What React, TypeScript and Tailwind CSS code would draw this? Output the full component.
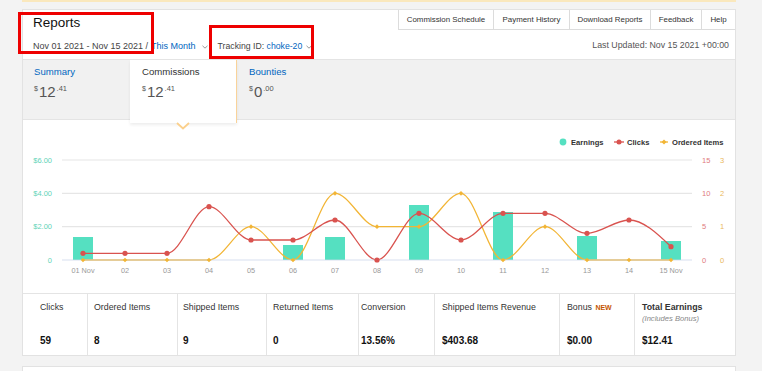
import React from "react";

const FONT = "Liberation Sans, Arial, sans-serif";
const xs = Array.from({ length: 15 }, (_, i) => 60 + 42 * i);
const clicks = [1, 1, 1, 8, 3, 3, 6, 0, 7, 3, 7, 7, 4, 6, 2];
const items = [0, 0, 0, 0, 1, 0, 2, 1, 1, 2, 0, 1, 0, 0, 0];
const bars: Record<number, number> = { 0: 117, 5: 125, 6: 117, 8: 85, 10: 92, 12: 116, 14: 121 };
const labels = ["01 Nov", "02", "03", "04", "05", "06", "07", "08", "09", "10", "11", "12", "13", "14", "15 Nov"];

const clickY = (v: number) => 140 - (v * 100) / 15;
const itemY = (v: number) => 140 - (v * 100) / 3;

function monotone(pts: [number, number][]) {
  const n = pts.length;
  const t: number[] = new Array(n).fill(0);
  const sign = (v: number) => (v < 0 ? -1 : 1);
  for (let i = 1; i < n - 1; i++) {
    const h0 = pts[i][0] - pts[i - 1][0];
    const h1 = pts[i + 1][0] - pts[i][0];
    const s0 = (pts[i][1] - pts[i - 1][1]) / h0;
    const s1 = (pts[i + 1][1] - pts[i][1]) / h1;
    const p = (s0 * h1 + s1 * h0) / (h0 + h1);
    t[i] = (sign(s0) + sign(s1)) * Math.min(Math.abs(s0), Math.abs(s1), 0.5 * Math.abs(p)) || 0;
  }
  const h0 = pts[1][0] - pts[0][0];
  t[0] = (3 * (pts[1][1] - pts[0][1]) / h0 - t[1]) / 2;
  const hl = pts[n - 1][0] - pts[n - 2][0];
  t[n - 1] = (3 * (pts[n - 1][1] - pts[n - 2][1]) / hl - t[n - 2]) / 2;
  let d = `M${pts[0][0]},${pts[0][1]}`;
  for (let i = 0; i < n - 1; i++) {
    const [x0, y0] = pts[i];
    const [x1, y1] = pts[i + 1];
    const dx = (x1 - x0) / 3;
    d += ` C${x0 + dx},${y0 + dx * t[i]} ${x1 - dx},${y1 - dx * t[i + 1]} ${x1},${y1}`;
  }
  return d;
}

function Chevron({ className = "" }: { className?: string }) {
  return (
    <svg width="6" height="4" viewBox="0 0 6 4" className={className}>
      <polyline points="0.5,0.8 3,3.2 5.5,0.8" fill="none" stroke="#8a8a8a" strokeWidth="0.9" />
    </svg>
  );
}

function Amount({ whole, cents }: { whole: string; cents: string }) {
  return (
    <div className="mt-[6px] flex items-start leading-none text-[#555]">
      <span className="text-[7px] mt-[1px]">$</span>
      <span className="text-[15px] ml-[1px]">{whole}</span>
      <span className="text-[7.5px] mt-[1px] ml-[1px]">{cents}</span>
    </div>
  );
}

function Chart() {
  const grid = [40, 73.33, 106.67];
  const clickPts = xs.map((x, i) => [x, clickY(clicks[i])] as [number, number]);
  const itemPts = xs.map((x, i) => [x, itemY(items[i])] as [number, number]);
  return (
    <svg width="712" height="173" viewBox="0 0 712 173" style={{ fontFamily: FONT }}>
      {/* legend */}
      <circle cx="540" cy="22" r="3.4" fill="#55e0c1" />
      <text x="548" y="24.8" fontSize="7.6" fontWeight="bold" fill="#333">Earnings</text>
      <line x1="591" y1="22" x2="601" y2="22" stroke="#d9534f" strokeWidth="1.3" />
      <circle cx="596" cy="22" r="2.5" fill="#d9534f" />
      <text x="604" y="24.8" fontSize="7.6" fontWeight="bold" fill="#333">Clicks</text>
      <line x1="637" y1="22" x2="645" y2="22" stroke="#f2b535" strokeWidth="1.3" />
      <polygon points="641,19.5 643.5,22 641,24.5 638.5,22" fill="#f2b535" />
      <text x="649" y="24.8" fontSize="7.6" fontWeight="bold" fill="#333">Ordered Items</text>

      {grid.map((y) => (
        <line key={y} x1="39" y1={y} x2="669" y2={y} stroke="#e6e6e6" strokeWidth="1.2" />
      ))}
      {["$6.00", "$4.00", "$2.00", "0"].map((l, i) => (
        <text key={l} x="29" y={40 + i * 33.33 + 2.7} fontSize="7.5" fill="#5fd3b7" textAnchor="end">{l}</text>
      ))}
      {["15", "10", "5", "0"].map((l, i) => (
        <text key={l} x="679" y={40 + i * 33.33 + 2.7} fontSize="7.5" fill="#e07b7e">{l}</text>
      ))}
      {["3", "2", "1", "0"].map((l, i) => (
        <text key={l} x="697" y={40 + i * 33.33 + 2.7} fontSize="7.5" fill="#eab85c">{l}</text>
      ))}
      {labels.map((l, i) => (
        <text key={l} x={xs[i]} y="153" fontSize="7.3" fill="#999" textAnchor="middle">{l}</text>
      ))}

      {Object.entries(bars).map(([i, top]) => (
        <rect key={i} x={xs[+i] - 10} y={top} width="20" height={140 - top} fill="#55e0c1" />
      ))}

      <path d={monotone(itemPts)} fill="none" stroke="#f2b535" strokeWidth="1.3" />
      <path d={monotone(clickPts)} fill="none" stroke="#d9534f" strokeWidth="1.3" />
      <line x1="39" y1="140" x2="669" y2="140" stroke="#ccd6eb" strokeWidth="1.2" opacity="0.75" />

      {clickPts.map(([x, y], i) => (
        <circle key={"c" + i} cx={x} cy={y} r="2.6" fill="#d9534f" />
      ))}
      {itemPts.map(([x, y], i) => (
        <polygon key={"o" + i} points={`${x},${y - 2.3} ${x + 2.3},${y} ${x},${y + 2.3} ${x - 2.3},${y}`} fill="#f2b535" />
      ))}
    </svg>
  );
}

const stats: { label: React.ReactNode; value: string; pl: string; sub?: string }[] = [
  { label: "Clicks", value: "59", pl: "pl-[17px]" },
  { label: "Ordered Items", value: "8", pl: "pl-[6px]" },
  { label: "Shipped Items", value: "9", pl: "pl-[5px]" },
  { label: "Returned Items", value: "0", pl: "pl-[6px]" },
  { label: "Conversion", value: "13.56%", pl: "pl-[2px]" },
  { label: "Shipped Items Revenue", value: "$403.68", pl: "pl-[7px]" },
  {
    label: (
      <span>
        Bonus <span className="ml-[1px] text-[7px] font-bold text-[#c45500]">NEW</span>
      </span>
    ),
    value: "$0.00",
    pl: "pl-[7px]",
  },
  { label: <span className="font-bold">Total Earnings</span>, value: "$12.41", pl: "pl-[7px]", sub: "(Includes Bonus)" },
];

export default function App() {
  return (
    <div className="relative w-[762px] h-[371px] overflow-hidden bg-[#f3f3f3] font-['Liberation_Sans',Arial,sans-serif]">
      <div className="ml-[22px] w-[714px] h-[2px] bg-[#fae8bd]" />
      <div className="mt-[7px] ml-[22px] w-[714px] bg-white border border-[#e2e2e2]">
        {/* header */}
        <div className="h-[49px] flex justify-between">
          <div className="pl-[10px] pt-[5px]">
            <div className="text-[13.5px] leading-[16px] text-[#111]">Reports</div>
            <div className="mt-[9px] flex items-center text-[9px] leading-[12px] text-[#444]">
              <span>Nov 01 2021 - Nov 15 2021 /</span>
              <span className="ml-[3px] text-[#0066c0]">This Month</span>
              <Chevron className="ml-[6px] mt-[2px]" />
              <span className="ml-[10px] text-[8.7px]">
                Tracking ID: <span className="text-[#0066c0]">choke-20</span>
              </span>
              <Chevron className="ml-[4px] mt-[2px]" />
            </div>
          </div>
          <div className="flex flex-col items-end">
            <div className="flex h-[20px] border-b border-[#dcdcdc] text-[7.9px] text-[#333]">
              {[
                ["Commission Schedule", "w-[95px]"],
                ["Payment History", "w-[76px]"],
                ["Download Reports", "w-[81px]"],
                ["Feedback", "w-[51px]"],
                ["Help", "w-[34px]"],
              ].map(([t, w]) => (
                <div key={t} className={`${w} border-l border-[#dcdcdc] flex items-center justify-center`}>
                  {t}
                </div>
              ))}
            </div>
            <div className="mt-[10px] pr-[6px] text-[8.8px] leading-[11px] text-[#555]">Last Updated: Nov 15 2021 +00:00</div>
          </div>
        </div>

        {/* tabs */}
        <div className="h-[61px] flex items-start bg-[#f1f1f1] border-y border-[#e4e4e4]">
          <div className="w-[107px] pl-[11px] pt-[6px]">
            <div className="text-[9.6px] leading-[12px] text-[#0066c0]">Summary</div>
            <Amount whole="12" cents=".41" />
          </div>
          <div className="relative z-10 w-[107px] h-[63px] bg-white border-r border-[#f9d39a] pl-[12px] pt-[6px] shadow-[0_2px_3px_rgba(0,0,0,0.07)]">
            <div className="text-[9.6px] leading-[12px] text-[#333]">Commissions</div>
            <Amount whole="12" cents=".41" />
            <svg width="16" height="8" viewBox="0 0 16 8" className="absolute left-[45px] top-[62px]">
              <polyline points="2,1 8,6.5 14,1" fill="white" stroke="#fbd08c" strokeWidth="1.8" />
            </svg>
          </div>
          <div className="w-[107px] pl-[12px] pt-[6px]">
            <div className="text-[9.6px] leading-[12px] text-[#0066c0]">Bounties</div>
            <Amount whole="0" cents=".00" />
          </div>
        </div>

        {/* chart */}
        <div className="h-[173px]">
          <Chart />
        </div>

        {/* stats */}
        <div className="grid grid-cols-[64px_90px_89px_92px_76px_125px_75px_101px] border-t border-[#e4e4e4]">
          {stats.map((s, i) => (
            <div
              key={i}
              className={`${i > 0 ? "border-l border-[#e4e4e4]" : ""} ${s.pl} h-[61px] pt-[8px] pb-[8px] flex flex-col justify-between`}
            >
              <div>
                <div className="text-[8.8px] leading-[11px] text-[#333]">{s.label}</div>
                {s.sub && <div className="mt-[1px] text-[7.6px] leading-[10px] italic text-[#888]">{s.sub}</div>}
              </div>
              <div className="text-[10px] leading-[12px] font-bold text-[#111]">{s.value}</div>
            </div>
          ))}
        </div>
      </div>
      <div className="mt-[10px] ml-[22px] w-[714px] h-[20px] bg-white border border-[#e2e2e2]" />

      {/* annotation boxes */}
      <div className="absolute left-[18px] top-[12px] w-[136px] h-[42px] border-[3px] border-[#ee0000]" />
      <div className="absolute left-[209px] top-[25px] w-[105px] h-[34px] border-[3px] border-[#ee0000]" />
    </div>
  );
}
